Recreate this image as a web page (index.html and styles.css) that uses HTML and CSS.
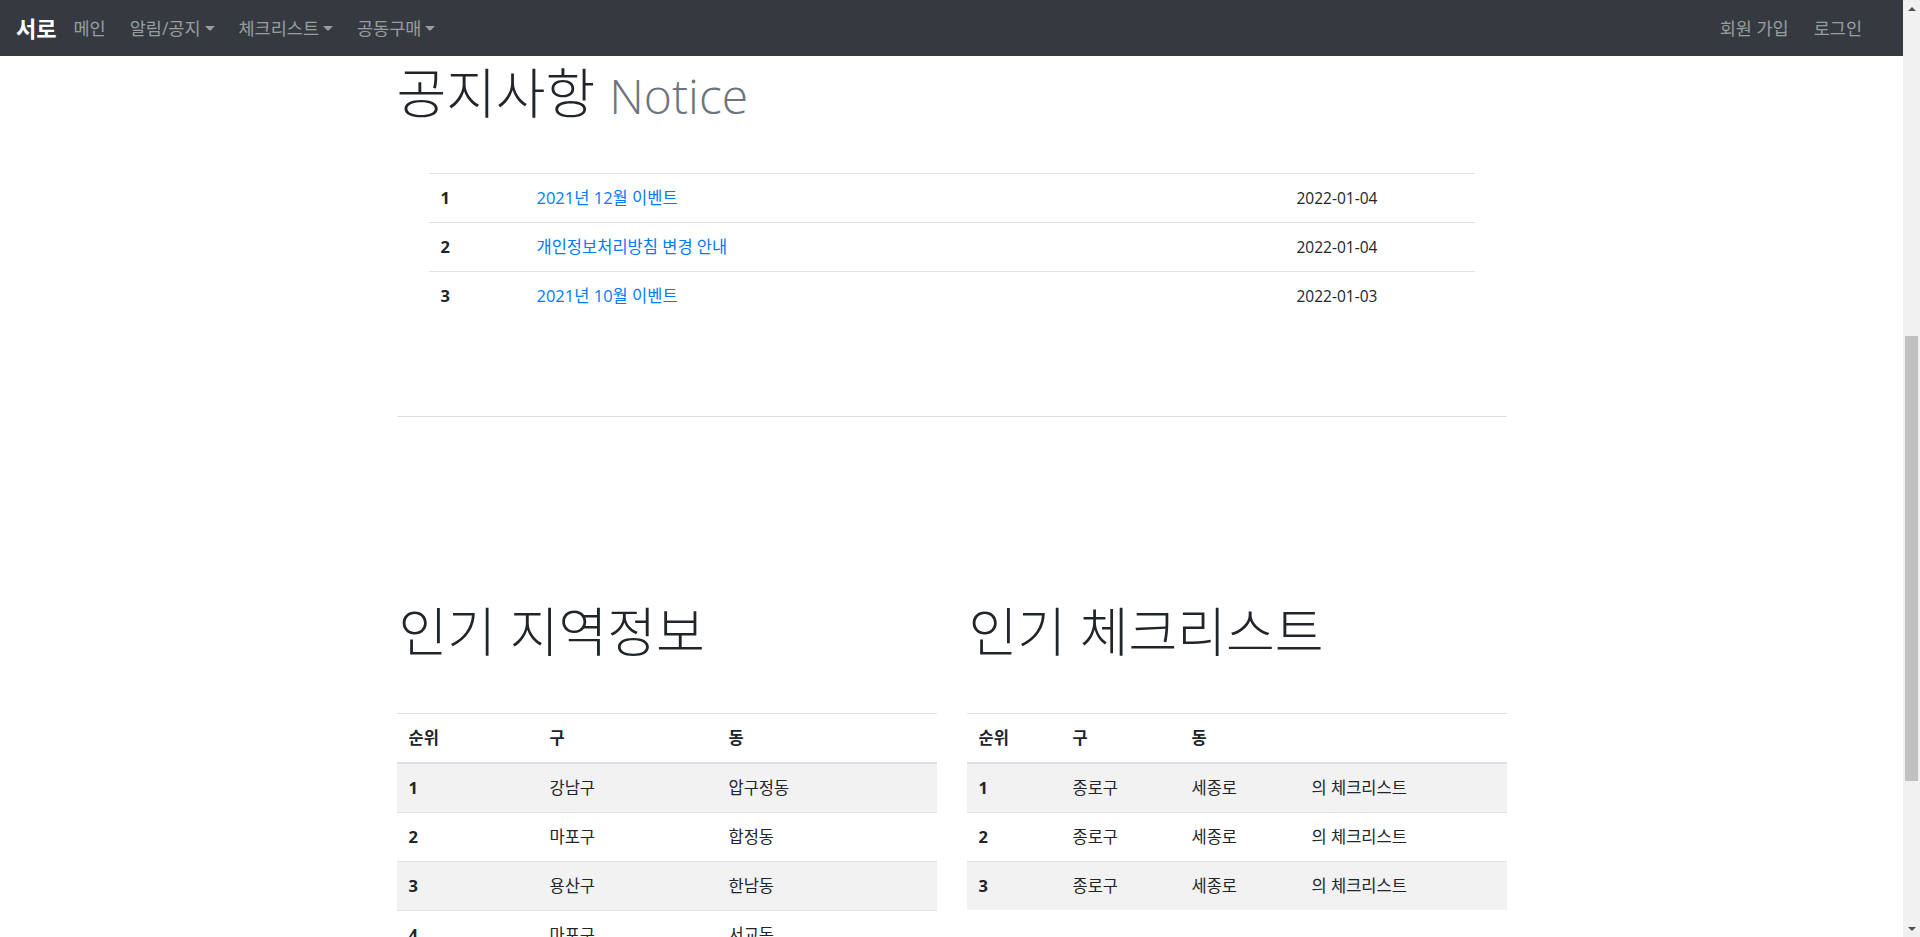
FILE: index.html
```html
<!DOCTYPE html>
<html lang="ko">
<head>
<meta charset="utf-8">
<title>서로</title>
<link rel="stylesheet" href="styles.css">
</head>
<body>
<div class="window">
  <div class="viewport">
    <nav class="navbar">
      <div class="nav-left">
        <a class="brand" href="#">서로</a>
        <a class="nav-link" href="#">메인</a>
        <a class="nav-link dropdown" href="#">알림/공지</a>
        <a class="nav-link dropdown" href="#">체크리스트</a>
        <a class="nav-link dropdown" href="#">공동구매</a>
      </div>
      <div class="nav-right">
        <a class="nav-link" href="#">회원 가입</a>
        <a class="nav-link" href="#">로그인</a>
      </div>
    </nav>
    <main class="container">
      <h1 class="notice-title">공지사항 <span class="muted">Notice</span></h1>
      <table class="table notice-table">
        <colgroup><col class="c-num"><col class="c-title"><col class="c-date"></colgroup>
        <tbody>
          <tr><th>1</th><td><a href="#">2021년 12월 이벤트</a></td><td class="date">2022-01-04</td></tr>
          <tr><th>2</th><td><a href="#">개인정보처리방침 변경 안내</a></td><td class="date">2022-01-04</td></tr>
          <tr><th>3</th><td><a href="#">2021년 10월 이벤트</a></td><td class="date">2022-01-03</td></tr>
        </tbody>
      </table>
      <hr class="divider">
      <div class="popular">
        <section>
          <h2 class="section-title">인기 지역정보</h2>
          <table class="table striped region-table">
            <colgroup><col class="r1"><col class="r2"><col></colgroup>
            <thead><tr><th>순위</th><th>구</th><th>동</th></tr></thead>
            <tbody>
              <tr><th>1</th><td>강남구</td><td>압구정동</td></tr>
              <tr><th>2</th><td>마포구</td><td>합정동</td></tr>
              <tr><th>3</th><td>용산구</td><td>한남동</td></tr>
              <tr><th>4</th><td>마포구</td><td>서교동</td></tr>
            </tbody>
          </table>
        </section>
        <section>
          <h2 class="section-title">인기 체크리스트</h2>
          <table class="table striped check-table">
            <colgroup><col class="k1"><col class="k2"><col class="k3"><col></colgroup>
            <thead><tr><th>순위</th><th>구</th><th>동</th><th></th></tr></thead>
            <tbody>
              <tr><th>1</th><td>종로구</td><td>세종로</td><td>의 체크리스트</td></tr>
              <tr><th>2</th><td>종로구</td><td>세종로</td><td>의 체크리스트</td></tr>
              <tr><th>3</th><td>종로구</td><td>세종로</td><td>의 체크리스트</td></tr>
            </tbody>
          </table>
        </section>
      </div>
    </main>
  </div>
  <div class="scrollbar">
    <div class="sb-btn"><span class="arrow-up"></span></div>
    <div class="sb-track"><div class="sb-thumb"></div></div>
    <div class="sb-btn"><span class="arrow-down"></span></div>
  </div>
</div>
</body>
</html>
```
FILE: styles.css
```css
* { box-sizing: border-box; }
html, body { margin: 0; padding: 0; }
body {
  font-family: "Open Sans", "Noto Sans CJK KR", sans-serif;
  font-size: 16.5px;
  line-height: 1.5;
  color: #212529;
  background: #fff;
}
a { text-decoration: none; }

.window { display: flex; width: 1920px; height: 937px; overflow: hidden; }
.viewport { flex: 1; min-width: 0; overflow: hidden; }

/* navbar */
.navbar {
  height: 56px;
  background: #343a40;
  display: flex;
  align-items: center;
  justify-content: space-between;
  padding: 0 41px 0 16px;
}
.nav-left, .nav-right { display: flex; align-items: center; }
.brand { color: #fff; font-weight: 700; font-size: 22px; margin-right: 17px; }
.nav-link { color: rgba(255,255,255,.5); font-size: 17.5px; }
.nav-left .nav-link + .nav-link { margin-left: 24px; }
.nav-right .nav-link + .nav-link { margin-left: 25px; }
.dropdown::after {
  content: "";
  display: inline-block;
  margin-left: 4px;
  vertical-align: 4px;
  border-top: 5px solid;
  border-left: 5px solid transparent;
  border-right: 5px solid transparent;
}

/* content */
.container { width: 1110px; margin: 0 auto; }
.notice-title {
  margin: 8px 0 0;
  height: 58px;
  font-size: 54px;
  font-weight: 300;
  line-height: 58px;
}
.muted { color: #6c757d; font-size: 48px; }

.table { border-collapse: collapse; color: #212529; }
.table th, .table td {
  padding: 12px;
  border-top: 1px solid #dee2e6;
  text-align: left;
  vertical-align: top;
  line-height: 24px;
}
.table th { font-weight: 700; }
.table thead th { border-bottom: 2px solid #dee2e6; }

.notice-table { width: 1046px; margin: 51px 32px 0; }
.c-num { width: 96px; }
.c-title { width: 760px; }
.notice-table a { color: #007bff; }
.notice-table .date { font-size: 15.5px; }

.divider {
  margin: 96px 0 0;
  border: 0;
  border-top: 1px solid rgba(0,0,0,.12);
}

.popular {
  display: grid;
  grid-template-columns: 1fr 1fr;
  column-gap: 30px;
  margin-top: 184px;
}
.section-title {
  margin: 0 0 0 2px;
  height: 62px;
  font-size: 53px;
  font-weight: 300;
  line-height: 62px;
}
.popular .table { width: 100%; margin-top: 50px; }
.striped tbody tr:nth-child(odd) { background: #f2f2f2; }
.r1 { width: 141px; }
.r2 { width: 179px; }
.k1 { width: 94px; }
.k2 { width: 119px; }
.k3 { width: 120px; }

/* scrollbar */
.scrollbar {
  width: 17px;
  background: #f1f1f1;
  display: flex;
  flex-direction: column;
}
.sb-btn { height: 17px; display: flex; align-items: center; justify-content: center; }
.sb-track { flex: 1; padding: 319px 2px 0; }
.sb-thumb { height: 445px; background: #c1c1c1; }
.arrow-up, .arrow-down {
  width: 0; height: 0;
  border-left: 4px solid transparent;
  border-right: 4px solid transparent;
}
.arrow-up { border-bottom: 4px solid #505050; }
.arrow-down { border-top: 4px solid #505050; }
```
